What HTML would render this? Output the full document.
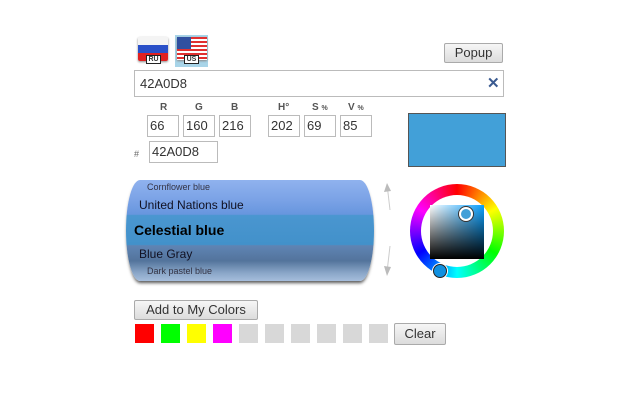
<!DOCTYPE html>
<html><head><meta charset="utf-8"><style>
*{margin:0;padding:0;box-sizing:border-box}
body{width:640px;height:400px;background:#fff;font-family:"Liberation Sans",Arial,sans-serif;position:relative;overflow:hidden;color:#333}
.a{position:absolute}
.btn{position:absolute;border:1px solid #aaa;border-radius:2px;background:linear-gradient(#f6f6f6,#dcdcdc);font-size:13px;color:#333;text-align:center}
.in{position:absolute;border:1px solid #bbb;background:#fff;font-size:13px;color:#333;padding-left:2px;height:22px;line-height:20px}
.lb{position:absolute;font-size:10px;font-weight:bold;color:#555;top:102px}
.sw{position:absolute;top:324px;width:19px;height:19px}
</style></head><body>
<div class="a" style="left:138px;top:37px;width:30px;height:24px;border-radius:2px;overflow:hidden;box-shadow:0 1px 2px #888">
<div style="height:8px;background:#f4f4f4"></div><div style="height:8px;background:#2a50c8"></div><div style="height:8px;background:#e02020"></div></div>
<div class="a" style="left:146px;top:55px;width:15px;height:9px;background:#fff;border:1px solid #222;font-size:7px;font-weight:bold;line-height:7px;text-align:center">RU</div>
<div class="a" style="left:175px;top:35px;width:33px;height:32px;background:#a8d4e8"></div>
<div class="a" style="left:177px;top:37px;width:30px;height:23px;background:repeating-linear-gradient(#e03030 0 2px,#fff 2px 4px);box-shadow:0 1px 2px #888"></div>
<div class="a" style="left:177px;top:37px;width:14px;height:12px;background:#3050a0"></div>
<div class="a" style="left:184px;top:55px;width:15px;height:9px;background:#fff;border:1px solid #222;font-size:7px;font-weight:bold;line-height:7px;text-align:center">US</div>
<div class="btn" style="left:444px;top:43px;width:59px;height:20px;line-height:18px">Popup</div>
<div class="in" style="left:134px;top:70px;width:370px;height:27px;line-height:25px;padding-left:5px;font-size:13px">42A0D8</div>
<div class="a" style="left:487px;top:74px;font-size:15px;font-weight:bold;color:#3a5a90">✕</div>
<div class="lb" style="left:160px">R</div><div class="lb" style="left:195px">G</div><div class="lb" style="left:231px">B</div>
<div class="lb" style="left:278px">H°</div><div class="lb" style="left:312px">S <span style="font-size:7px">%</span></div><div class="lb" style="left:348px">V <span style="font-size:7px">%</span></div>
<div class="in" style="left:147px;top:115px;width:32px">66</div>
<div class="in" style="left:183px;top:115px;width:32px">160</div>
<div class="in" style="left:219px;top:115px;width:32px">216</div>
<div class="in" style="left:268px;top:115px;width:32px">202</div>
<div class="in" style="left:304px;top:115px;width:32px">69</div>
<div class="in" style="left:340px;top:115px;width:32px">85</div>
<div class="a" style="left:134px;top:149px;font-size:9px;color:#666">#</div>
<div class="in" style="left:149px;top:141px;width:69px">42A0D8</div>
<div class="a" style="left:408px;top:113px;width:98px;height:54px;background:#42A0D8;border:1px solid #555"></div>
<div class="a" style="left:126px;top:180px;width:248px;height:101px;border-radius:14px/50px;overflow:hidden;box-shadow:0 3px 3px -1px #555;
background:linear-gradient(#90b2ee 0%,#7aa2e6 20%,#6796de 34%,#4a96d0 35%,#4291ca 64%,#5f84b4 65%,#53749c 80%,#8aa6c8 92%,#a6bedc 100%)"></div>
<div class="a" style="left:147px;top:182px;font-size:9px;color:#334">Cornflower blue</div>
<div class="a" style="left:139px;top:198px;font-size:12px;color:#112">United Nations blue</div>
<div class="a" style="left:134px;top:222px;font-size:14px;font-weight:bold;color:#000">Celestial blue</div>
<div class="a" style="left:139px;top:247px;font-size:12px;color:#112">Blue Gray</div>
<div class="a" style="left:147px;top:266px;font-size:9px;color:#334">Dark pastel blue</div>
<svg class="a" style="left:380px;top:180px" width="20" height="100"><path d="M7 4 L10 30" stroke="#ccc" stroke-width="1" fill="none"/><path d="M4 12 L7 3 L11 11Z" fill="#bbb"/><path d="M10 66 L7 92" stroke="#ccc" fill="none"/><path d="M4 86 L7 96 L11 87Z" fill="#bbb"/></svg>
<div class="a" style="left:410px;top:184px;width:94px;height:94px;border-radius:50%;background:conic-gradient(red,#ff0,#0f0,cyan,blue,#f0f,red)"></div>
<div class="a" style="left:421px;top:195px;width:72px;height:72px;border-radius:50%;background:#fff"></div>
<div class="a" style="left:430px;top:205px;width:54px;height:54px;background:linear-gradient(transparent,#000),linear-gradient(90deg,#fff,#0aa0ff)"></div>
<div class="a" style="left:459px;top:207px;width:14px;height:14px;border-radius:50%;background:#42A0D8;border:2px solid #fff;box-shadow:0 0 0 1px #333"></div>
<div class="a" style="left:433px;top:264px;width:14px;height:14px;border-radius:50%;background:#1090e0;border:1px solid #222;box-shadow:0 0 0 1px #fff"></div>
<div class="btn" style="left:134px;top:300px;width:124px;height:20px;line-height:18px;font-size:13px">Add to My Colors</div>
<div class="sw" style="left:135px;background:#f00"></div>
<div class="sw" style="left:161px;background:#0f0"></div>
<div class="sw" style="left:187px;background:#ff0"></div>
<div class="sw" style="left:213px;background:#f0f"></div>
<div class="sw" style="left:239px;background:#d8d8d8"></div>
<div class="sw" style="left:265px;background:#d8d8d8"></div>
<div class="sw" style="left:291px;background:#d8d8d8"></div>
<div class="sw" style="left:317px;background:#d8d8d8"></div>
<div class="sw" style="left:343px;background:#d8d8d8"></div>
<div class="sw" style="left:369px;background:#d8d8d8"></div>
<div class="btn" style="left:394px;top:323px;width:52px;height:22px;line-height:20px">Clear</div>
</body></html>
